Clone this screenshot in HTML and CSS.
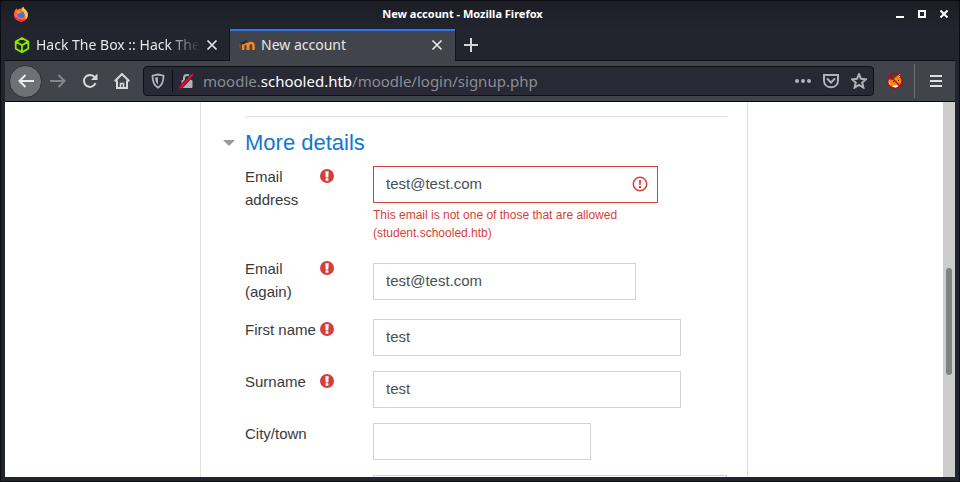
FILE: index.html
```html
<!DOCTYPE html>
<html lang="en">
<head>
<meta charset="utf-8">
<title>New account</title>
<link rel="stylesheet" href="styles.css">
</head>
<body>
<svg class="defs" aria-hidden="true">
  <symbol id="required" viewBox="0 0 14 14">
    <circle cx="7" cy="7" r="7" fill="#d43f3a"/>
    <path d="M5.300 2.300h3.400L8.300 8.400H5.700zM5.600 9.300h2.800v2.400H5.600z" fill="#fff"/>
  </symbol>
  <symbol id="close" viewBox="0 0 12 12">
    <path d="M1.500 1.500l9 9M10.500 1.500l-9 9" fill="none" stroke="currentColor" stroke-width="1.700"/>
  </symbol>
</svg>
<div class="window">
  <header class="titlebar">
    <svg class="app-icon" viewBox="0 0 16 16" aria-hidden="true">
      <path d="M2 4.500C2.500 3.500 3 3 3.300 2.300c.4.8 1 1.200 1.700 1.500 1-.8 2-1.200 3.300-1.200C9 2 9.500 1 10.500.700c0 1.500 1 2 2.200 3.300 1.600 1.700 2.300 3 2.100 5.200C14.500 12.800 11.800 15.500 8 15.500S1 12.500 1 9c0-1.800.4-3.300 1-4.500z" fill="#ff6a35"/>
      <path d="M10.500.700c0 1.500 1 2 2.200 3.300 1.600 1.700 2.300 3 2.100 5.200-.2 2-1.100 3.700-2.500 4.800.8-3.500-.3-6.500-2.800-8C8.300 4.500 9 1.500 10.500.700z" fill="#ffc73d"/>
      <path d="M1 9c0 3.500 3.200 6.500 7 6.500 2.500 0 4.600-1.100 5.700-2.900C10 14.500 4 14 1 9z" fill="#f5275a"/>
      <circle cx="8" cy="8.500" r="3.500" fill="#3f76dc"/>
      <path d="M4 5c2-.8 3 .3 5 .7-.8 1.300-2.500.8-3 2.300C4.500 8 3.500 6.500 4 5z" fill="#ff9b3d"/>
    </svg>
    <h1 class="window-title">New account - Mozilla Firefox</h1>
    <div class="window-buttons">
      <button aria-label="Minimize"><svg viewBox="0 0 8 8"><path d="M0 7h8" stroke="#fff" stroke-width="2"/></svg></button>
      <button aria-label="Maximize"><svg viewBox="0 0 8 8"><path d="M1 1h6v6H1z" fill="none" stroke="#fff" stroke-width="2"/></svg></button>
      <button aria-label="Close"><svg viewBox="0 0 8 8"><path d="M.5.5l7 7M7.500.5l-7 7" stroke="#fff" stroke-width="2"/></svg></button>
    </div>
  </header>

  <nav class="tabs" aria-label="Tabs">
    <div class="tab">
      <svg class="favicon" viewBox="0 0 16 16" aria-hidden="true"><path d="M8 1l6.300 3.600v7L8 15.200l-6.300-3.600v-7zM1.700 4.600L8 8.200l6.300-3.600M8 8.200v7" fill="none" stroke="#8fe600" stroke-width="1.800" stroke-linejoin="round"/></svg>
      <button class="tab-label faded">Hack The Box :: Hack The</button>
      <button class="tab-close" aria-label="Close tab"><svg><use href="#close"/></svg></button>
    </div>
    <div class="tab active">
      <svg class="favicon" viewBox="0 0 16 16" aria-hidden="true">
        <path d="M4.200 13V8.800c0-2.800 4.600-2.800 4.600 0V13M9.300 13V8.800c0-3.600 5.200-3.600 5.200 0V13" fill="none" stroke="#f08a24" stroke-width="2.500"/>
        <path d="M1 5.500l6-2.500 2 1-3 3-5 .5z" fill="#33302f"/>
        <path d="M1 6.500v4" stroke="#8b5b43"/>
      </svg>
      <button class="tab-label">New account</button>
      <button class="tab-close" aria-label="Close tab"><svg><use href="#close"/></svg></button>
    </div>
    <button class="new-tab" aria-label="New tab"><svg viewBox="0 0 14 14"><path d="M7 0v14M0 7h14" stroke="#d5d5d8" stroke-width="2"/></svg></button>
  </nav>

  <div class="toolbar">
    <button class="tool back" aria-label="Back"><svg viewBox="0 0 16 16"><path d="M16 8H1.500M7.500 2l-6 6 6 6" /></svg></button>
    <button class="tool forward" aria-label="Forward"><svg viewBox="0 0 16 16"><path d="M0 8h14.500M8.500 2l6 6-6 6"/></svg></button>
    <button class="tool" aria-label="Reload"><svg viewBox="0 0 16 16"><path d="M13.500 10.200A6 6 0 1 1 12.700 4.200"/><path d="M15.500.500v6.500H9z" fill="currentColor" stroke="none"/></svg></button>
    <button class="tool" aria-label="Home"><svg viewBox="0 0 16 16"><path d="M.7 8.300L8 1l7.300 7.300M3 7.500V15h10V7.500"/><path d="M6.500 15v-4.500h3V15" stroke-width="1.500"/></svg></button>
    <div class="urlbar">
      <svg class="shield" viewBox="0 0 16 16" aria-hidden="true"><path d="M8 1.500l5.500 1.200c0 5.800-1.300 9.600-5.500 12-4.200-2.400-5.500-6.200-5.500-12z" fill="none" stroke="#b1b1b6" stroke-width="1.800"/><path d="M8 4v7.700c-2-1.800-2.800-4-3-7z" fill="#b1b1b6"/></svg>
      <span class="divider"></span>
      <svg class="lock" viewBox="0 0 16 16" aria-hidden="true"><path d="M5 7V5c0-4 6-4 6 0v2" fill="none" stroke="#b1b1b6" stroke-width="2"/><rect x="2.500" y="7" width="11" height="8" rx="1" fill="#b1b1b6"/><path d="M1 15L14 1" stroke="#282934" stroke-width="4"/><path d="M1 15L14 1" stroke="#ff0039" stroke-width="2"/></svg>
      <div class="address" role="textbox" aria-label="Address">moodle.<b>schooled.htb</b>/moodle/login/signup.php</div>
      <button class="page-action" aria-label="Page actions"><svg viewBox="0 0 16 16" fill="currentColor"><circle cx="2" cy="8" r="2"/><circle cx="8" cy="8" r="2"/><circle cx="14" cy="8" r="2"/></svg></button>
      <button class="page-action" aria-label="Save to Pocket"><svg viewBox="0 0 16 16"><path d="M1 2h14v5.500c0 9-14 9-14 0z"/><path d="M4.500 6L8 9.500 11.500 6" stroke-width="2" stroke-linecap="round"/></svg></button>
      <button class="page-action" aria-label="Bookmark"><svg viewBox="0 0 16 16"><path d="M8 1.200l2 4.600 5 .5-3.800 3.300 1.200 5L8 12l-4.400 2.600 1.200-5L1 6.300l5-.5z"/></svg></button>
    </div>
    <button class="extension" aria-label="FoxyProxy"><svg viewBox="0 0 16 16"><path d="M1.500 6L5 7l7-5.500.5 3L15 7l-2 5-4 2.500-5-1L1 11z" fill="#ef8a0b"/><path d="M1 7l2.500 4L2 13zM11 2l2-1 .5 4zM5 13l3 2 3-1-1-2z" fill="#fff"/><path d="M6 8l1 1M11 7l1 1" stroke="#321"/><circle cx="8" cy="8" r="7.300" fill="none" stroke="#cb0000" stroke-width="1.300"/><path d="M3 3l10 10" stroke="#cb0000" stroke-width="1.300"/></svg></button>
    <span class="toolbar-line"></span>
    <button class="menu" aria-label="Open menu"><svg viewBox="0 0 12 12"><path d="M0 1h12M0 6h12M0 11h12" stroke="#dedee0" stroke-width="2"/></svg></button>
  </div>

  <div class="viewport">
    <main class="page">
      <form class="card">
        <hr>
        <h2><svg viewBox="0 0 12 6" aria-hidden="true"><path d="M0 0h12L6 6z" fill="#999"/></svg><a href="#details">More details</a></h2>
        <div class="rows" id="details">
          <div class="row">
            <label for="email">Email address</label>
            <svg class="required" role="img" aria-label="Required"><use href="#required"/></svg>
            <div class="field">
              <div class="invalid">
                <input id="email" type="text" value="test@test.com" aria-describedby="email-error" aria-invalid="true">
                <svg viewBox="0 0 16 16" aria-hidden="true"><circle cx="8" cy="8" r="6.700" fill="none" stroke="#d43f3a" stroke-width="1.500"/><path d="M7 4h2l-.3 5H7.300zM7 10h2v2H7z" fill="#d43f3a"/></svg>
              </div>
              <p class="error" id="email-error">This email is not one of those that are allowed (student.schooled.htb)</p>
            </div>
          </div>
          <div class="row">
            <label for="email2">Email (again)</label>
            <svg class="required" role="img" aria-label="Required"><use href="#required"/></svg>
            <div class="field"><input class="medium" id="email2" type="text" value="test@test.com"></div>
          </div>
          <div class="row">
            <label for="firstname">First name</label>
            <svg class="required" role="img" aria-label="Required"><use href="#required"/></svg>
            <div class="field"><input id="firstname" type="text" value="test"></div>
          </div>
          <div class="row">
            <label for="surname">Surname</label>
            <svg class="required" role="img" aria-label="Required"><use href="#required"/></svg>
            <div class="field"><input id="surname" type="text" value="test"></div>
          </div>
          <div class="row">
            <label for="city">City/town</label>
            <span></span>
            <div class="field"><input class="small" id="city" type="text"></div>
          </div>
          <div class="row">
            <span></span>
            <span></span>
            <div class="field"><select aria-label="Country"></select></div>
          </div>
        </div>
      </form>
    </main>
    <div class="scrollbar"><div class="thumb"></div></div>
  </div>
</div>
</body>
</html>
```

FILE: styles.css
```css
* { box-sizing: border-box; }

body {
  margin: 0;
  background: #0c0d12;
  font-family: "Liberation Sans", Arial, sans-serif;
}

button {
  padding: 0;
  border: 0;
  background: none;
  color: inherit;
  font: inherit;
}

svg { display: block; flex: none; }
.defs { position: absolute; width: 0; height: 0; }

.window {
  display: flex;
  flex-direction: column;
  height: 100vh;
  overflow: hidden;
  padding: 0 4px 4px;
  border: 1px solid #0c0d12;
  border-radius: 4px 4px 0 0;
  background: #23252e;
  color: #d9d9dc;
}

/* Title bar */
.titlebar {
  display: flex;
  align-items: center;
  flex: none;
  height: 28px;
  margin: 0 -4px;
  padding: 0 11px 2px 12px;
  background: linear-gradient(#1c1d25, #23252e);
}

.app-icon { width: 16px; height: 16px; }

.window-title {
  flex: 1;
  margin: 0;
  color: #fff;
  font: bold 11px/16px "Noto Sans", sans-serif;
  text-align: center;
}

.window-buttons { display: flex; gap: 14px; }
.window-buttons svg { width: 8px; height: 8px; }

/* Tabs */
.tabs {
  display: flex;
  flex: none;
  height: 32px;
  border-bottom: 1px solid #101118;
  font: 14px/20px "Noto Sans", sans-serif;
}

.tab {
  display: flex;
  align-items: center;
  gap: 6px;
  width: 225px;
  padding: 0 12px 0 9px;
  color: #e6e6e8;
}

.tab.active {
  height: 32px;
  padding-bottom: 3px;
  border-top: 2px solid #2a78f6;
  background: #42444b;
  box-shadow: 0 0 0 1px #15161d;
  clip-path: inset(0 -1px);
}

.favicon { width: 16px; height: 16px; }

.tab-label {
  flex: 1;
  overflow: hidden;
  text-align: left;
  white-space: nowrap;
}

.faded { mask-image: linear-gradient(to right, #000 80%, transparent); }
.tab-close svg { width: 12px; height: 12px; }
.new-tab { padding: 0 9px; }
.new-tab svg { width: 14px; height: 14px; }

/* Toolbar */
.toolbar {
  display: flex;
  align-items: center;
  flex: none;
  height: 41px;
  padding: 0 13px 0 4px;
  border-bottom: 1px solid #08090c;
  background: #42444b;
}

.tool {
  display: grid;
  place-items: center;
  width: 32px;
  height: 32px;
}

.tool svg, .page-action svg {
  width: 16px;
  height: 16px;
  fill: none;
  stroke: currentColor;
  stroke-width: 2;
}

.tool.back {
  width: 33px;
  height: 33px;
  border: 1px solid #2e3036;
  border-radius: 50%;
  background: #707176;
  color: #ececee;
}

.forward { color: #85868b; }

.urlbar {
  display: flex;
  align-items: center;
  flex: 1;
  min-width: 0;
  height: 30px;
  margin: 0 13px 0 5px;
  padding: 0 0 0 6px;
  border: 1px solid #0f1016;
  border-radius: 4px;
  background: #282934;
}

.shield, .lock { width: 16px; height: 16px; }
.divider { width: 1px; height: 22px; margin: 0 6px; background: #0c0d12; }

.address {
  flex: 1;
  overflow: hidden;
  margin-left: 8px;
  color: #8b8c94;
  font: 15px/20px "Noto Sans", sans-serif;
  white-space: nowrap;
}

.address b { color: #fff; font-weight: 400; }

.page-action {
  display: grid;
  place-items: center;
  width: 28px;
  height: 28px;
  color: #b1b1b6;
}

.page-action:first-of-type svg { stroke: none; fill: currentColor; }
.extension svg { width: 16px; height: 16px; }
.toolbar-line { width: 1px; height: 34px; margin: 0 15px 0 11px; background: #707176; }
.menu svg { width: 12px; height: 12px; }

/* Page */
.viewport {
  display: flex;
  flex: 1;
  min-height: 0;
  background: #fff;
}

.page { flex: 1; overflow: hidden; }

.card {
  max-width: 548px;
  min-height: 100%;
  margin: 0 auto;
  padding: 14px 20px 0 44px;
  border: solid #dee2e6;
  border-width: 0 1px;
}

hr {
  height: 1px;
  margin: 0;
  border: 0;
  background: #dee2e6;
}

h2 {
  display: flex;
  align-items: center;
  gap: 10px;
  margin: 9px 0 7px -22px;
  font: 22px/33px "Liberation Sans", Arial, sans-serif;
}

h2 a { color: #1177d1; text-decoration: none; }
h2 svg { width: 12px; height: 6px; }

.rows { display: grid; gap: 15px; }

.row {
  display: grid;
  grid-template-columns: 75px 53px 1fr;
  color: #373a3c;
  font-size: 15px;
  line-height: 23px;
}

.row label { margin: -1px 0 1px; }
.required { width: 14px; height: 14px; margin-top: 3px; }
.field { align-self: center; }

.row input, .row select {
  display: block;
  width: 308px;
  max-width: 100%;
  height: 37px;
  padding: 0 12px 2px;
  border: 1px solid #ced4da;
  border-radius: 0;
  background: #fff;
  color: #495057;
  font: inherit;
}

.row input.medium { width: 263px; }
.row input.small { width: 218px; }
.row select { width: 354px; }

.invalid { position: relative; width: 285px; max-width: 100%; }
.row .invalid input { width: 100%; padding-right: 36px; border-color: #d43f3a; }

.invalid svg {
  position: absolute;
  top: 10px;
  right: 10px;
  width: 16px;
  height: 16px;
}

.error {
  max-width: 285px;
  margin: 3px 0 1px;
  color: #d43f3a;
  font-size: 12px;
  line-height: 18px;
}

.scrollbar {
  flex: none;
  width: 12px;
  padding: 0 3px;
  background: #cdcdcd;
}

.thumb {
  height: 107px;
  margin-top: 166px;
  border-radius: 3px;
  background: #7f8383;
}
```
